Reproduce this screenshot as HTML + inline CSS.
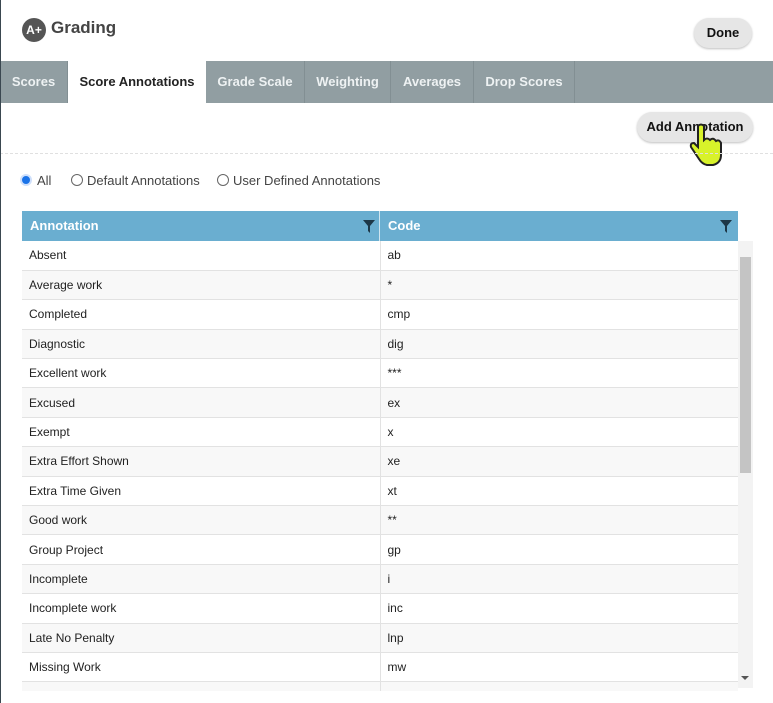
<!DOCTYPE html><html><head><style>
*{box-sizing:border-box;margin:0;padding:0}
body{width:773px;height:703px;overflow:hidden;background:#fff;font-family:"Liberation Sans",Arial,sans-serif;position:relative}
.abs{position:absolute}
.tabs{left:0;top:61px;width:773px;height:42px;background:#919ea2}
.tab{position:absolute;top:0;height:42px;line-height:42px;font-size:13px;font-weight:bold;color:#eef2f3;text-align:center;border-right:1px solid #828f93}
.tab.act{background:#fff;color:#222;border:none}
.btn{background:#e6e6e6;border-radius:16px;font-weight:bold;font-size:13px;color:#111;text-align:center;box-shadow:0 1px 2px rgba(0,0,0,.25)}
table{border-collapse:collapse;font-size:12px;color:#222}
td{height:29.4px;border-bottom:1px solid #e2e2e2;padding-left:7px;vertical-align:middle}
tr:nth-child(even) td{background:#f8f8f8}
td+td{border-left:1px solid #e2e2e2}
.r{display:inline-block;width:12px;height:12px;border-radius:50%;border:1px solid #666;vertical-align:-1px}
</style></head><body>
<div class="abs" style="left:0;top:0;width:1px;height:703px;background:#3a4750;z-index:5"></div>
<div class="abs" style="left:22px;top:18px;width:24px;height:24px;border-radius:50%;background:#555;color:#fff;font-size:12px;font-weight:bold;line-height:24px;text-align:center">A+</div>
<div class="abs" style="left:51px;top:18px;font-size:17px;font-weight:bold;color:#444">Grading</div>
<div class="abs btn" style="left:694px;top:18px;width:58px;height:30px;line-height:30px">Done</div>
<div class="abs tabs">
<div class="tab" style="left:0;width:68px">Scores</div>
<div class="tab act" style="left:68px;width:138px">Score Annotations</div>
<div class="tab" style="left:206px;width:99px">Grade Scale</div>
<div class="tab" style="left:305px;width:86px">Weighting</div>
<div class="tab" style="left:391px;width:83px">Averages</div>
<div class="tab" style="left:474px;width:101px">Drop Scores</div>
</div>
<div class="abs btn" style="left:637px;top:112px;width:116px;height:30px;line-height:30px">Add Annotation</div>
<svg class="abs" style="left:688px;top:122px" width="36" height="44" viewBox="0 0 36 44"><path d="M10 4 q3-3 6 0 v14 q3-3 6 0 q3-3 6 1 q3-2 5 2 v12 q0 8-8 10 h-6 q-5-1-8-6 l-8-12 q-1-4 3-4 l4 4 z" fill="#d8f22a" stroke="#222" stroke-width="2"/></svg>
<div class="abs" style="left:0;top:153px;width:773px;border-top:1px dashed #e0e0e0"></div>
<span class="abs r" style="left:20px;top:174px;background:#1a73e8;border:2px solid #cfe0fb"></span>
<span class="abs" style="left:37px;top:173px;font-size:13px;color:#444">All</span>
<span class="abs r" style="left:71px;top:174px"></span>
<span class="abs" style="left:87px;top:173px;font-size:13px;color:#444">Default Annotations</span>
<span class="abs r" style="left:217px;top:174px"></span>
<span class="abs" style="left:233px;top:173px;font-size:13px;color:#444">User Defined Annotations</span>
<div class="abs" style="left:22px;top:211px;width:716px;height:30px;background:#6aaed0;color:#fff;font-weight:bold;font-size:13px;line-height:30px">
<span class="abs" style="left:8px">Annotation</span><span class="abs" style="left:366px">Code</span>
<div class="abs" style="left:357px;top:0;width:1px;height:30px;background:#cfe5f0"></div>
<svg class="abs" style="left:341px;top:9px" width="12" height="13"><path d="M0 0h12L7 6v7L5 11V6z" fill="#1d3747"/></svg>
<svg class="abs" style="left:698px;top:9px" width="12" height="13"><path d="M0 0h12L7 6v7L5 11V6z" fill="#1d3747"/></svg>
</div>
<div class="abs" style="left:22px;top:241px;width:716px;height:450px;overflow:hidden">
<table style="width:716px">
<colgroup><col style="width:358px"><col></colgroup>
<tr><td>Absent</td><td>ab</td></tr>
<tr><td>Average work</td><td>*</td></tr>
<tr><td>Completed</td><td>cmp</td></tr>
<tr><td>Diagnostic</td><td>dig</td></tr>
<tr><td>Excellent work</td><td>***</td></tr>
<tr><td>Excused</td><td>ex</td></tr>
<tr><td>Exempt</td><td>x</td></tr>
<tr><td>Extra Effort Shown</td><td>xe</td></tr>
<tr><td>Extra Time Given</td><td>xt</td></tr>
<tr><td>Good work</td><td>**</td></tr>
<tr><td>Group Project</td><td>gp</td></tr>
<tr><td>Incomplete</td><td>i</td></tr>
<tr><td>Incomplete work</td><td>inc</td></tr>
<tr><td>Late No Penalty</td><td>lnp</td></tr>
<tr><td>Missing Work</td><td>mw</td></tr>
<tr><td>&nbsp;</td><td></td></tr>
</table></div>
<div class="abs" style="left:738px;top:241px;width:15px;height:447px;background:#f3f3f3"></div>
<div class="abs" style="left:740px;top:257px;width:11px;height:216px;background:#c4c4c4"></div>
<div class="abs" style="left:741px;top:676px;width:0;height:0;border-left:4px solid transparent;border-right:4px solid transparent;border-top:4px solid #555"></div>
</body></html>
